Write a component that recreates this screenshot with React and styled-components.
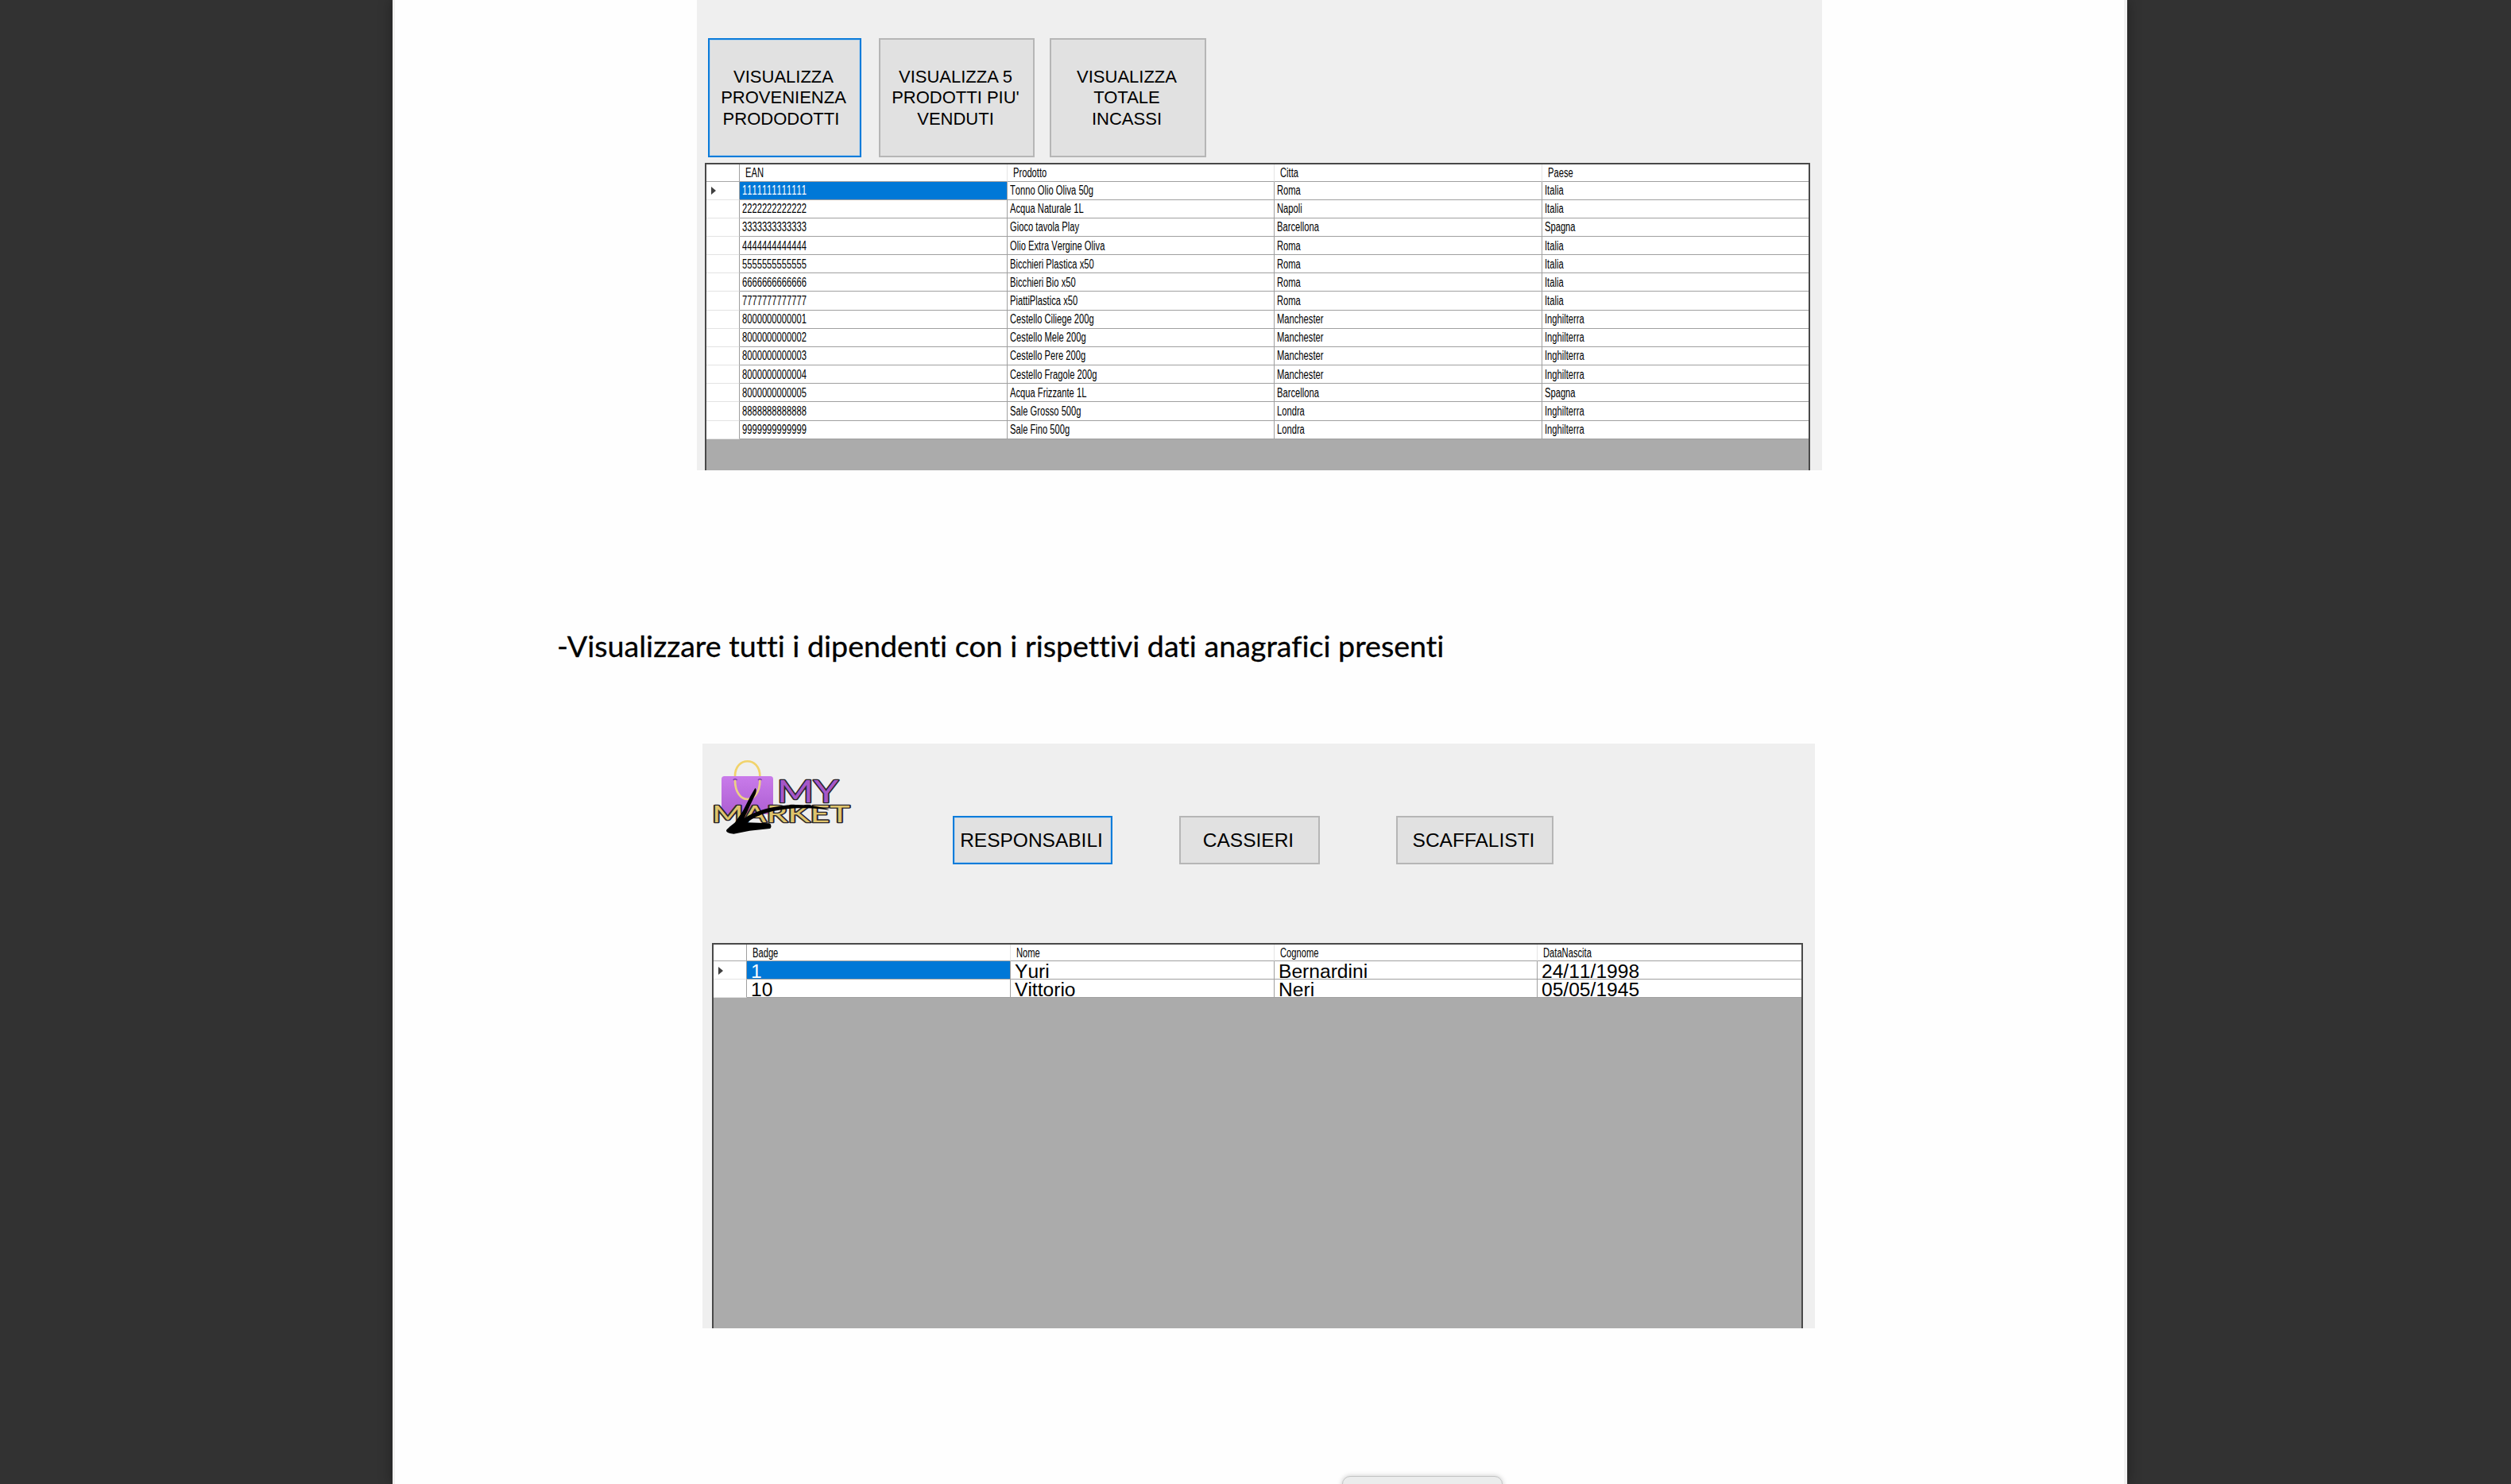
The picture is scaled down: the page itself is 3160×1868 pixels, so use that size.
import React from "react";
import styled, { createGlobalStyle, css } from "styled-components";

const GlobalStyle = createGlobalStyle`
  html, body { margin: 0; padding: 0; background: #323232; }
  * { box-sizing: border-box; }
`;

const Viewer = styled.main`
  position: relative;
  display: flex;
  width: 3160px;
  height: 1868px;
  padding-left: 494px;
  overflow: hidden;
  background: #323232;
  font-family: "Liberation Sans", Arial, sans-serif;
  color: #000;
`;

const Page = styled.article`
  display: flex;
  flex-direction: column;
  width: 2183px;
  height: 1868px;
  background: #fefefe;
  border-left: 3px solid #f1f1f0;
  border-right: 4px solid #f1f1f1;
  box-shadow: 0 0 16px rgba(0, 0, 0, 0.35);
`;

const Panel = styled.section`
  display: flex;
  flex-direction: column;
  flex: none;
  width: ${(p) => p.$width}px;
  height: ${(p) => p.$height}px;
  margin-left: ${(p) => p.$indent}px;
  background: #efefef;
  overflow: hidden;
`;

const ReportActions = styled.div`
  display: flex;
  flex: none;
  height: 205px;
  padding: 48px 0 0 14px;
`;

const StaffHeader = styled.header`
  display: flex;
  flex: none;
  height: 251px;
`;

const StaffActions = styled.div`
  display: flex;
  align-items: flex-start;
  padding: 91px 0 0 99px;
`;

const Button = styled.button`
  flex: none;
  width: ${(p) => p.$width}px;
  height: ${(p) => p.$height}px;
  margin: 0 ${(p) => p.$gap || 0}px 0 0;
  padding: 1px 3px 0 0;
  border: 2px solid #b6b6b6;
  background: #e1e1e1;
  color: #000;
  font: ${(p) => p.$size}px/26.4px "Liberation Sans", Arial, sans-serif;
  white-space: pre;
  text-align: center;
  ${(p) =>
    p.$active &&
    css`
      border-color: #0c7cda;
      box-shadow: inset 0 0 0 1px #b9d3ea;
    `}
`;

const Heading = styled.h2`
  flex: none;
  height: 344px;
  margin: 0;
  padding: 197px 0 0 204px;
  font: 400 37px/48px Lato, sans-serif;
  white-space: nowrap;
`;

const HeadingText = styled.span`
  display: inline-block;
  transform: scaleX(${(p) => p.$stretch});
  transform-origin: left;
  font-variant-ligatures: none;
  -webkit-text-stroke: 0.3px #000;
`;

const Grid = styled.div`
  flex: 1;
  width: ${(p) => p.$width}px;
  margin-left: ${(p) => p.$indent}px;
  border: solid #494949;
  border-width: 2px 2px 0 2px;
  background: #ababab;
`;

const Row = styled.div`
  display: grid;
  grid-template-columns: ${(p) => p.$columns};
  grid-template-rows: 100%;
  height: ${(p) => p.$height}px;
  background: #fff;
`;

const Marker = styled.div`
  display: flex;
  align-items: center;
  padding: 1px 0 0 6px;
  border-right: 1px solid #a0a0a0;
  border-bottom: 1px solid ${(p) => (p.$head ? "#a8a8a8" : "#e3e3e3")};
`;

const Cell = styled.div`
  display: flex;
  align-items: center;
  min-width: 0;
  padding: 1px 0 0 ${(p) => p.$pad}px;
  border-right: 1px solid ${(p) => (p.$head ? "#e5e5e5" : "#a0a0a0")};
  border-bottom: 1px solid #a0a0a0;
  background: ${(p) => (p.$selected ? "#0078d7" : "#fff")};
  color: ${(p) => (p.$selected ? "#fff" : "#000")};
  line-height: 18px;
  white-space: nowrap;
  &:last-child { border-right: 0; }
`;

const SmallText = styled.span`
  font-size: 15.8px;
  font-kerning: none;
  transform: scaleX(0.708);
  transform-origin: left;
`;

const LargeText = styled.span`
  font-size: 24.6px;
  font-kerning: none;
  margin-top: 2px;
`;

const BottomBar = styled.div`
  position: absolute;
  left: 1689px;
  top: 1858px;
  width: 202px;
  height: 30px;
  border-radius: 10px;
  border: 1px solid #c4c5c5;
  background: #ebecec;
  box-shadow: 0 0 6px rgba(0, 0, 0, 0.22);
`;

const LogoSvg = styled.svg`
  flex: none;
  display: block;
  width: 216px;
  height: 134px;
`;

const Arrow = () => (
  <svg width="6" height="10" viewBox="0 0 6 10" aria-hidden="true">
    <path d="M0 0 L6 5 L0 10 Z" fill="#404040" />
  </svg>
);

const LogoWord = ({ x, y, width, size, fill, children }) => (
  <text
    x={x}
    y={y}
    textLength={width}
    lengthAdjust="spacingAndGlyphs"
    fontFamily="Lato, sans-serif"
    fontSize={size}
    strokeLinejoin="round"
    paintOrder="stroke"
    fill={fill}
    stroke="#29242b"
    strokeWidth="8"
  >
    {children}
  </text>
);

const Logo = () => (
  <LogoSvg viewBox="12 18 648 402">
    <defs>
      <linearGradient id="bag" x1="0" y1="0" x2="0" y2="1">
        <stop offset="0" stopColor="#c97bea" />
        <stop offset="1" stopColor="#ad5fd2" />
      </linearGradient>
    </defs>
    <rect x="84" y="141" width="195" height="143" rx="11" fill="url(#bag)" />
    <path d="M135 141 C135 66 229 66 229 141" fill="none" stroke="#f1d36b" strokeWidth="8" />
    <path d="M135 156 C135 252 229 252 229 156" fill="none" stroke="#ecd086" strokeWidth="8" />
    <path d="M128 156 q7 -8 15 0 M222 156 q7 -8 14 0" fill="none" stroke="#874aa5" strokeWidth="5" />
    <LogoWord x={293} y={239} width={232} size={116} fill="#a557c8">MY</LogoWord>
    <LogoWord x={48} y={315} width={520} size={86} fill="#dfc46c">MARKET</LogoWord>
    <path
      d="M211 186 C216 189 216 197 213 207 L193 249 L170 300 C211 273 260 259 320 252 C377 245 453 251 491 269 C432 261 375 259 320 266 C257 274 209 291 181 316 L263 319 C274 321 273 337 266 339 L190 347 L130 359 C119 359 101 354 102 346 C107 337 124 326 135 316 L164 274 L193 217 Z"
      fill="#000"
    />
  </LogoSvg>
);

const productHead = ["EAN", "Prodotto", "Citta", "Paese"];
const products = [
  ["1111111111111", "Tonno Olio Oliva 50g", "Roma", "Italia"],
  ["2222222222222", "Acqua Naturale 1L", "Napoli", "Italia"],
  ["3333333333333", "Gioco tavola Play", "Barcellona", "Spagna"],
  ["4444444444444", "Olio Extra Vergine Oliva", "Roma", "Italia"],
  ["5555555555555", "Bicchieri Plastica x50", "Roma", "Italia"],
  ["6666666666666", "Bicchieri Bio x50", "Roma", "Italia"],
  ["7777777777777", "PiattiPlastica x50", "Roma", "Italia"],
  ["8000000000001", "Cestello Ciliege 200g", "Manchester", "Inghilterra"],
  ["8000000000002", "Cestello Mele 200g", "Manchester", "Inghilterra"],
  ["8000000000003", "Cestello Pere 200g", "Manchester", "Inghilterra"],
  ["8000000000004", "Cestello Fragole 200g", "Manchester", "Inghilterra"],
  ["8000000000005", "Acqua Frizzante 1L", "Barcellona", "Spagna"],
  ["8888888888888", "Sale Grosso 500g", "Londra", "Inghilterra"],
  ["9999999999999", "Sale Fino 500g", "Londra", "Inghilterra"],
];

const staffHead = ["Badge", "Nome", "Cognome", "DataNascita"];
const staff = [
  ["1", "Yuri", "Bernardini", "24/11/1998"],
  ["10", "Vittorio", "Neri", "05/05/1945"],
];

function DataGrid({ indent, width, columns, head, rows, headHeight, rowHeight, cellPad, large }) {
  const Text = large ? LargeText : SmallText;
  return (
    <Grid $indent={indent} $width={width}>
      <Row $columns={columns} $height={headHeight}>
        <Marker $head />
        {head.map((label) => (
          <Cell key={label} $head $pad={7}>
            <SmallText>{label}</SmallText>
          </Cell>
        ))}
      </Row>
      {rows.map((row, r) => (
        <Row key={row[0]} $columns={columns} $height={rowHeight}>
          <Marker>{r === 0 && <Arrow />}</Marker>
          {row.map((value, c) => (
            <Cell key={c} $pad={cellPad} $selected={r === 0 && c === 0}>
              <Text>{value}</Text>
            </Cell>
          ))}
        </Row>
      ))}
    </Grid>
  );
}

export default function App() {
  return (
    <Viewer>
      <GlobalStyle />
      <Page>
        <Panel $indent={380} $width={1416} $height={592}>
          <ReportActions>
            <Button $active $width={193} $height={150} $gap={22} $size={22}>
              {"VISUALIZZA\nPROVENIENZA\nPRODODOTTI\u00a0"}
            </Button>
            <Button $width={196} $height={150} $gap={19} $size={22}>
              {"VISUALIZZA 5\nPRODOTTI PIU'\nVENDUTI"}
            </Button>
            <Button $width={197} $height={150} $size={22}>
              {"VISUALIZZA\nTOTALE\nINCASSI"}
            </Button>
          </ReportActions>
          <DataGrid
            indent={10}
            width={1391}
            columns="42px 337px 336px 337px 1fr"
            head={productHead}
            rows={products}
            headHeight={21.5}
            rowHeight={23.17}
            cellPad={3}
          />
        </Panel>
        <Heading>
          <HeadingText $stretch={1.0165}>
            -Visualizzare tutti i dipendenti con i rispettivi dati anagrafici presenti
          </HeadingText>
        </Heading>
        <Panel $indent={387} $width={1400} $height={736}>
          <StaffHeader>
            <Logo />
            <StaffActions>
              <Button $active $width={201} $height={61} $gap={84} $size={24.5}>RESPONSABILI</Button>
              <Button $width={177} $height={61} $gap={96} $size={24.5}>CASSIERI</Button>
              <Button $width={198} $height={61} $size={24.5}>SCAFFALISTI</Button>
            </StaffActions>
          </StaffHeader>
          <DataGrid
            indent={12}
            width={1373}
            columns="42px 332px 332px 331px 1fr"
            head={staffHead}
            rows={staff}
            headHeight={21.3}
            rowHeight={23}
            cellPad={5}
            large
          />
        </Panel>
      </Page>
      <BottomBar />
    </Viewer>
  );
}
